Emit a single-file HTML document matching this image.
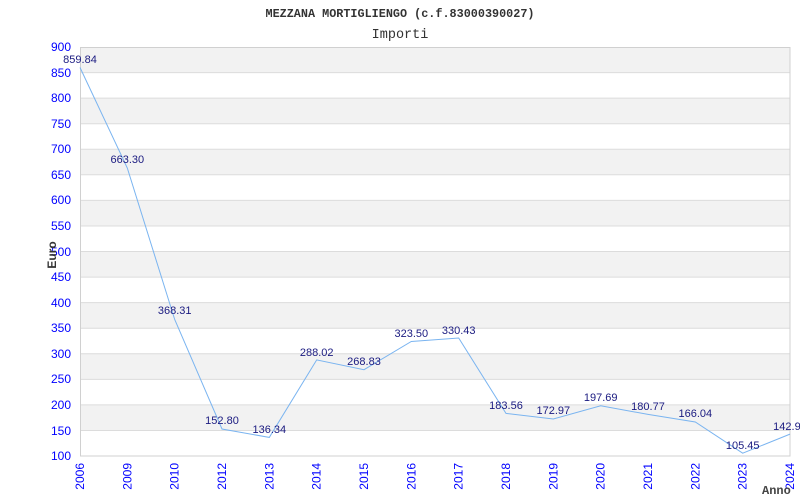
<!DOCTYPE html>
<html><head><meta charset="utf-8"><style>
html,body{margin:0;padding:0;background:#fff;width:800px;height:500px;overflow:hidden}
svg{display:block}
.ax{font-family:"Liberation Sans",sans-serif;font-size:12px;fill:#0000ff}
.lb{font-family:"Liberation Sans",sans-serif;font-size:11px;fill:#1a1a80}
.mono{font-family:"Liberation Mono",monospace;fill:#333}
</style></head><body>
<svg width="800" height="500" viewBox="0 0 800 500">
<text class="mono" x="400" y="17" font-size="11.8" font-weight="bold" text-anchor="middle">MEZZANA MORTIGLIENGO (c.f.83000390027)</text>
<text class="mono" x="400" y="38" font-size="13.5" text-anchor="middle">Importi</text>
<g fill="#f2f2f2">
<rect x="80" y="47" width="710" height="25.6"/>
<rect x="80" y="98.1" width="710" height="25.6"/>
<rect x="80" y="149.3" width="710" height="25.6"/>
<rect x="80" y="200.4" width="710" height="25.6"/>
<rect x="80" y="251.5" width="710" height="25.6"/>
<rect x="80" y="302.6" width="710" height="25.6"/>
<rect x="80" y="353.8" width="710" height="25.6"/>
<rect x="80" y="404.9" width="710" height="25.6"/>
</g>
<g stroke="#dcdcdc" stroke-width="1">
<line x1="80" x2="790" y1="72.6" y2="72.6"/><line x1="80" x2="790" y1="98.1" y2="98.1"/>
<line x1="80" x2="790" y1="123.7" y2="123.7"/><line x1="80" x2="790" y1="149.3" y2="149.3"/>
<line x1="80" x2="790" y1="174.8" y2="174.8"/><line x1="80" x2="790" y1="200.4" y2="200.4"/>
<line x1="80" x2="790" y1="226" y2="226"/><line x1="80" x2="790" y1="251.5" y2="251.5"/>
<line x1="80" x2="790" y1="277.1" y2="277.1"/><line x1="80" x2="790" y1="302.6" y2="302.6"/>
<line x1="80" x2="790" y1="328.2" y2="328.2"/><line x1="80" x2="790" y1="353.8" y2="353.8"/>
<line x1="80" x2="790" y1="379.4" y2="379.4"/><line x1="80" x2="790" y1="404.9" y2="404.9"/>
<line x1="80" x2="790" y1="430.5" y2="430.5"/>
</g>
<rect x="80.5" y="47.5" width="709.5" height="408.5" fill="none" stroke="#d0d0d0"/>
<g class="ax" text-anchor="end">
<text x="71" y="51">900</text><text x="71" y="77">850</text><text x="71" y="102">800</text>
<text x="71" y="128">750</text><text x="71" y="153">700</text><text x="71" y="179">650</text>
<text x="71" y="204">600</text><text x="71" y="230">550</text><text x="71" y="256">500</text>
<text x="71" y="281">450</text><text x="71" y="307">400</text><text x="71" y="332">350</text>
<text x="71" y="358">300</text><text x="71" y="383">250</text><text x="71" y="409">200</text>
<text x="71" y="435">150</text><text x="71" y="460">100</text>
</g>
<text x="56" y="255" font-family="Liberation Sans,sans-serif" font-size="12" font-weight="bold" fill="#333" transform="rotate(-90 56 255)" text-anchor="middle">Euro</text>
<g class="ax" text-anchor="end">
<text transform="translate(84,463) rotate(-90)">2006</text>
<text transform="translate(131.3,463) rotate(-90)">2009</text>
<text transform="translate(178.7,463) rotate(-90)">2010</text>
<text transform="translate(226,463) rotate(-90)">2012</text>
<text transform="translate(273.3,463) rotate(-90)">2013</text>
<text transform="translate(320.7,463) rotate(-90)">2014</text>
<text transform="translate(368,463) rotate(-90)">2015</text>
<text transform="translate(415.3,463) rotate(-90)">2016</text>
<text transform="translate(462.7,463) rotate(-90)">2017</text>
<text transform="translate(510,463) rotate(-90)">2018</text>
<text transform="translate(557.3,463) rotate(-90)">2019</text>
<text transform="translate(604.7,463) rotate(-90)">2020</text>
<text transform="translate(652,463) rotate(-90)">2021</text>
<text transform="translate(699.3,463) rotate(-90)">2022</text>
<text transform="translate(746.7,463) rotate(-90)">2023</text>
<text transform="translate(794,463) rotate(-90)">2024</text>
</g>
<text x="762" y="494" font-family="Liberation Mono,monospace" font-size="12" font-weight="bold" fill="#444">Anno</text>
<polyline fill="none" stroke="#7ab4f0" stroke-width="1" points="80,67.5 127.3,168 174.7,319.5 222,429 269.3,437.4 316.7,359.9 364,369.7 411.3,341.5 458.7,338 506,413.4 553.3,419 600.7,405.8 648,414.4 695.3,422 742.7,453.2 790,434.1"/>
<g class="lb" text-anchor="middle">
<text x="80" y="63">859.84</text><text x="127.3" y="163">663.30</text>
<text x="174.7" y="314">368.31</text><text x="222" y="424">152.80</text>
<text x="269.3" y="433">136.34</text><text x="316.7" y="356">288.02</text>
<text x="364" y="365">268.83</text><text x="411.3" y="337">323.50</text>
<text x="458.7" y="334">330.43</text><text x="506" y="409">183.56</text>
<text x="553.3" y="414">172.97</text><text x="600.7" y="401">197.69</text>
<text x="648" y="410">180.77</text><text x="695.3" y="417">166.04</text>
<text x="742.7" y="449">105.45</text><text x="790" y="430">142.97</text>
</g>
</svg>
</body></html>
